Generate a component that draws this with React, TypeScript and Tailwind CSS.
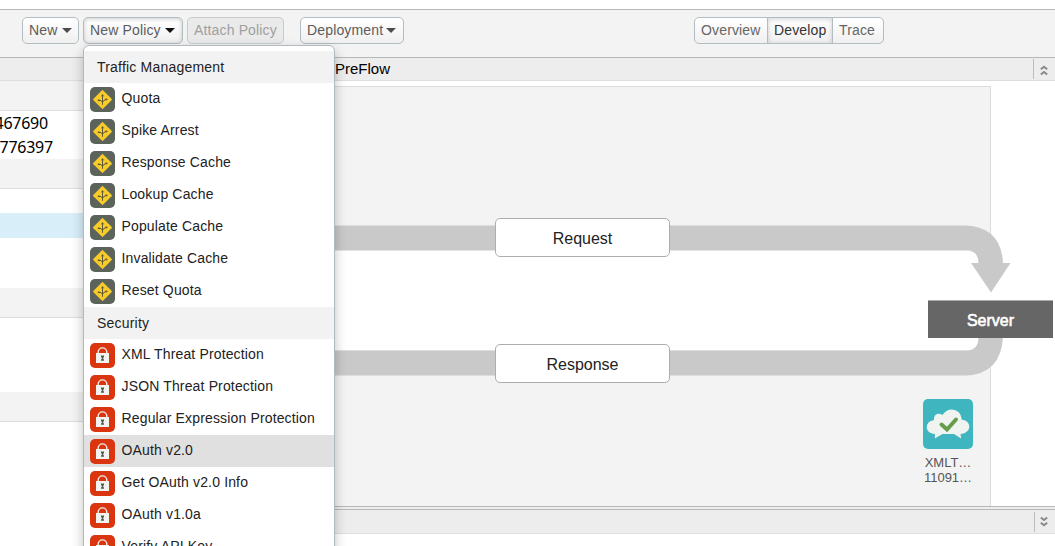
import type { ReactNode } from "react";

type IconKind = "traffic" | "lock";

function TrafficIcon() {
  return (
    <svg width="25" height="25" viewBox="0 0 25 25" className="block shrink-0">
      <rect width="25" height="25" rx="5" fill="#5c635b" />
      <rect x="5.6" y="5.6" width="13.8" height="13.8" rx="1" transform="rotate(45 12.5 12.5)" fill="#f9cb27" />
      <g stroke="#5b5a3c" strokeWidth="1" fill="none">
        <path d="M12.5 8v9.800" />
        <path d="M8.500 13.200q3.300-.2 4 2.300q.7-2.700 4-3" />
      </g>
      <path d="M12.500 7l1.500 2.200h-3zM7.300 13.200l2-1.300v2.600zM17.900 12.300l-2.200-1.200.2 2.700z" fill="#5b5a3c" />
    </svg>
  );
}

function LockIcon() {
  return (
    <svg width="25" height="25" viewBox="0 0 25 25" className="block shrink-0">
      <rect width="25" height="25" rx="5" fill="#db3510" />
      <path d="M8.200 11V9.200a4.300 4.300 0 0 1 8.600 0V11" fill="none" stroke="#f3ece6" strokeWidth="1.4" />
      <rect x="6" y="10" width="13" height="10" fill="#f0f3ef" />
      <path d="M11 12.500h3v2h-.8v1.700h.8v1.600h-3v-1.600h.8v-1.700h-.8z" fill="#555b53" />
    </svg>
  );
}

function Caret({ dark = false }: { dark?: boolean }) {
  return (
    <svg width="10" height="5" viewBox="0 0 10 5" className="block shrink-0">
      <path d="M0 0h10L5 5z" fill={dark ? "#111" : "#4d4d4d"} />
    </svg>
  );
}

function Chevrons({ down = false }: { down?: boolean }) {
  return (
    <svg width="8" height="11" viewBox="0 0 8 11" className={down ? "block rotate-180" : "block"}>
      <path d="M.8 4.200L4 1.700 7.200 4.200M.8 9.500L4 7l3.200 2.500" fill="none" stroke="#8a8a8a" strokeWidth="2" />
    </svg>
  );
}

function MenuHeader({ children }: { children: ReactNode }) {
  return <div className="flex h-8 shrink-0 items-center bg-[#f2f2f2] pl-[13px] tracking-[0.2px]">{children}</div>;
}

function MenuItem({ icon, label, active = false }: { icon: IconKind; label: string; active?: boolean }) {
  return (
    <div className={`flex h-8 shrink-0 gap-[6.5px] pl-[6px] pt-1 ${active ? "bg-[#e0e0e0]" : ""}`}>
      {icon === "traffic" ? <TrafficIcon /> : <LockIcon />}
      <span className="whitespace-nowrap pt-[1px] leading-5 tracking-[0.15px]">{label}</span>
    </div>
  );
}

const traffic = ["Quota", "Spike Arrest", "Response Cache", "Lookup Cache", "Populate Cache", "Invalidate Cache", "Reset Quota"];
const security = [
  "XML Threat Protection",
  "JSON Threat Protection",
  "Regular Expression Protection",
  "OAuth v2.0",
  "Get OAuth v2.0 Info",
  "OAuth v1.0a",
  "Verify API Key",
];

const button =
  "flex h-[27px] items-center whitespace-nowrap rounded-[5px] border border-[#b3bcc0] bg-gradient-to-b from-white to-[#f0f0f0] pl-[6px] text-[#5c5c5c]";

function Toolbar() {
  return (
    <div className="flex h-[49px] shrink-0 items-start border-y border-[#b8b8b8] bg-[#f3f3f3] pl-[22px] pt-[7px] tracking-[0.15px]">
      <div className={`${button} w-[57px] gap-[5px]`}>
        New <Caret />
      </div>
      <div className={`${button} ml-1 w-[100px] gap-1 shadow-[inset_0_1px_4px_rgba(0,0,0,0.2)]`}>
        New Policy <Caret dark />
      </div>
      <div className="ml-1 flex h-[27px] w-[97px] items-center whitespace-nowrap rounded-[5px] border border-[#c6cbcd] bg-[#eaeaea] pl-[6px] text-[#a0a0a0]">
        Attach Policy
      </div>
      <div className={`${button} ml-4 w-[104px] gap-[3px]`}>
        Deployment <Caret />
      </div>
      <div className="ml-[290px] flex h-[27px] w-[190px] overflow-hidden rounded-[5px] border border-[#b3bcc0] bg-gradient-to-b from-white to-[#f0f0f0] leading-[25px] text-[#666]">
        <span className="w-[73px] border-r border-[#b3bcc0] pl-[6px]">Overview</span>
        <span className="w-[65px] border-r border-[#b3bcc0] pl-[6px] text-[#333] shadow-[inset_0_1px_5px_rgba(0,0,0,0.18)]">Develop</span>
        <span className="pl-[6px]">Trace</span>
      </div>
    </div>
  );
}

function Sidebar() {
  return (
    <div className="flex w-[83px] shrink-0 flex-col">
      <div className="h-[23px] border-b border-[#dedede] bg-[#ededed]" />
      <div className="h-[30px] border-b border-[#dedede] bg-[#f3f3f3]" />
      <div className="flex h-12 flex-col items-start overflow-hidden font-['Noto_Sans',sans-serif] text-[16px] leading-6 tracking-[-0.25px] text-black">
        <span className="-ml-[5.5px]">467690</span>
        <span className="-ml-[0.5px]">776397</span>
      </div>
      <div className="h-[30px] border-b border-[#dedede] bg-[#f3f3f3]" />
      <div className="mt-6 h-[25px] bg-[#d8effa]" />
      <div className="mt-[50px] h-[30px] border-b border-[#dedede] bg-[#f3f3f3]" />
      <div className="mt-[74px] h-[30px] border-b border-[#dedede] bg-[#f3f3f3]" />
    </div>
  );
}

function FlowCanvas() {
  return (
    <div className="relative h-[425px] shrink-0 overflow-hidden">
      <div className="mt-[5px] h-[420px] w-[908px] border-r border-t border-[#dcdcdc] bg-[#f3f3f3]" />
      <svg width="972" height="425" viewBox="83 81 972 425" className="absolute left-0 top-0">
        <path d="M83 250H1003V350H83z" fill="#fff" />
        <path d="M83 225.500H966Q1001 227 1003 263H1010.500L991 292.500 971 263H978.500Q978 250.500 967 250.500H83z" fill="#c9c9c9" />
        <path d="M83 350.500H967Q978.500 350 978.500 337H1003Q1001 374 966 375.500H83z" fill="#c9c9c9" />
      </svg>
      <div className="absolute left-[412px] top-[137px] flex h-[39px] w-[175px] items-center justify-center rounded-[5px] border border-[#adadad] bg-white pt-[2px] text-[16px] text-[#222]">
        Request
      </div>
      <div className="absolute left-[412px] top-[263px] flex h-[39px] w-[175px] items-center justify-center rounded-[5px] border border-[#adadad] bg-white pt-[2px] text-[16px] text-[#222]">
        Response
      </div>
      <div className="absolute left-[845px] top-[219px] flex h-[38px] w-[125px] items-center justify-center border-t border-[#aaa] bg-[#666] pt-[2px] text-[16px] text-white [-webkit-text-stroke:0.6px_white]">
        Server
      </div>
      <div className="absolute left-[840px] top-[318px] flex w-[50px] flex-col items-center text-[13px] leading-[15px] text-[#555]">
        <svg width="50" height="50" viewBox="0 0 50 50" className="mb-[6px] block">
          <rect width="50" height="50" rx="5" fill="#3fb6bf" />
          <path
            d="M12 35C1 34.500 1.500 22 11 21.300C10.500 14.500 16 13.500 19.500 16C24 7.500 38 8.500 38.800 20.800C49 21.500 49 34.500 37.500 35L38.200 39.500 31 35H19.500L11.800 39.500z"
            fill="#eff4f1"
          />
          <path d="M18.500 25.500l5.500 5 9-10" fill="none" stroke="#669c4e" strokeWidth="4" strokeLinecap="round" />
        </svg>
        <span className="whitespace-nowrap">XMLT…</span>
        <span className="whitespace-nowrap">11091…</span>
      </div>
    </div>
  );
}

export default function App() {
  return (
    <div className="relative flex h-[546px] w-[1055px] flex-col overflow-hidden bg-white pt-[9px] font-['Liberation_Sans',Arial,sans-serif] text-[14px] text-[#222]">
      <Toolbar />
      <div className="flex flex-1">
        <Sidebar />
        <div className="flex min-w-0 flex-1 flex-col">
          <div className="flex h-[23px] shrink-0 items-center justify-between border-b border-[#dedede] bg-[#ededed] pl-[252px] text-[15px] text-black">
            <span>PreFlow</span>
            <span className="flex h-5 w-[22px] items-center border-l border-[#b9bec2] pl-[6px] pt-[2px]">
              <Chevrons />
            </span>
          </div>
          <FlowCanvas />
          <div className="h-1 shrink-0 border-y border-[#b8b8b8] bg-[#ededed]" />
          <div className="flex h-6 shrink-0 items-center justify-end border-b border-[#dedede] bg-[#ededed]">
            <span className="flex h-5 w-[21px] items-center border-l border-[#b9bec2] pl-[5px]">
              <Chevrons down />
            </span>
          </div>
        </div>
      </div>
      <div className="absolute left-[83px] top-[45px] flex h-[520px] w-[252px] flex-col rounded-t-[6px] border border-[#b1babf] bg-white pt-[5px] shadow-[0_5px_12px_rgba(0,0,0,0.25)]">
        <MenuHeader>Traffic Management</MenuHeader>
        {traffic.map((label) => (
          <MenuItem key={label} icon="traffic" label={label} />
        ))}
        <MenuHeader>Security</MenuHeader>
        {security.map((label) => (
          <MenuItem key={label} icon="lock" label={label} active={label === "OAuth v2.0"} />
        ))}
      </div>
    </div>
  );
}
